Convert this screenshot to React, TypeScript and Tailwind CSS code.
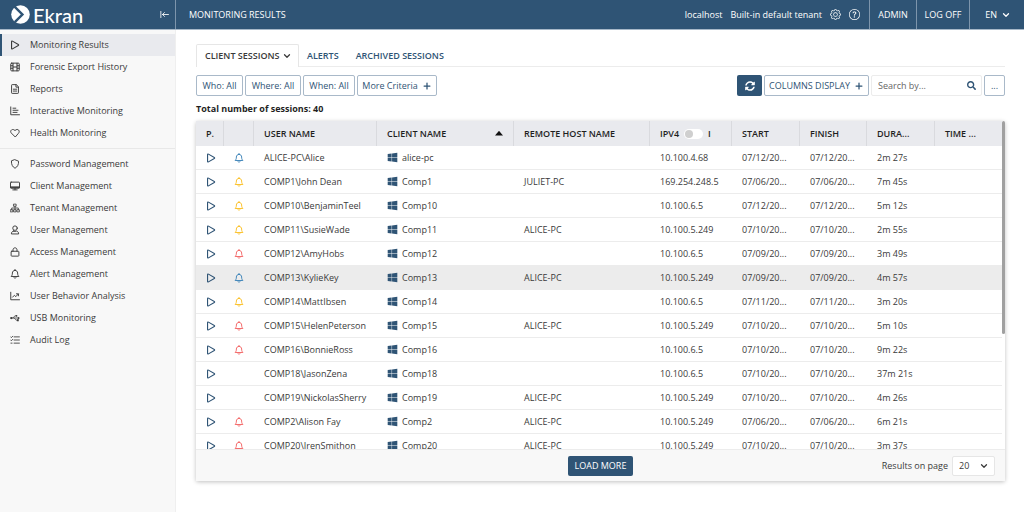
import React, { useState } from "react";
import clsx from "clsx";
import { FaSearch, FaSyncAlt, FaWindows } from "react-icons/fa";
import { BsQuestionCircle, BsGear } from "react-icons/bs";
import { ChevronDown, Plus } from "lucide-react";

type IconProps = { className?: string };

/* 16x16 outline icons */
const Outline: React.FC<IconProps & { children: React.ReactNode }> = ({ className, children }) => (
  <svg
    viewBox="0 0 16 16"
    className={className}
    fill="none"
    stroke="currentColor"
    strokeLinecap="round"
    strokeLinejoin="round"
    strokeWidth="1.5"
  >
    {children}
  </svg>
);

const PlayIcon: React.FC<IconProps> = ({ className }) => (
  <Outline className={className}>
    <path strokeWidth="1.8" d="M2.500 2.600v10.800c0 .8.700 1.200 1.400.8l9.400-5.400c.7-.4.7-1.200 0-1.600L3.900 1.800c-.7-.4-1.400 0-1.400.8z" />
  </Outline>
);

const FilmIcon: React.FC<IconProps> = ({ className }) => (
  <Outline className={className}>
    <rect x="1.200" y="1.800" width="13.600" height="12.400" rx="1.500" />
    <path strokeWidth="1.700" d="M4.800 2v12M11.200 2v12M4.800 8h6.400M1.500 6h3M1.500 10h3M11.500 6h3M11.500 10h3" />
  </Outline>
);

const FileIcon: React.FC<IconProps> = ({ className }) => (
  <Outline className={className}>
    <path d="M9.500 1H3.500a1 1 0 0 0-1 1v12a1 1 0 0 0 1 1h9a1 1 0 0 0 1-1V5zM9.500 1v4h4M5.300 8.300h5.400M5.300 11.300h5.400" />
  </Outline>
);

const ChartBarIcon: React.FC<IconProps> = ({ className }) => (
  <Outline className={className}>
    <path d="M1.200 1.500v12.500h14M4.800 3.500h4.500M4.800 6.800h8M4.800 10.200h6.500" />
  </Outline>
);

const HeartIcon: React.FC<IconProps> = ({ className }) => (
  <Outline className={className}>
    <path d="M8 14L2.200 8.200C-1 4.800 3.500-.2 8 4c4.500-4.200 9 .8 5.800 4.200z" />
  </Outline>
);

const ShieldIcon: React.FC<IconProps> = ({ className }) => (
  <Outline className={className}>
    <path d="M8 1.200L13.700 3.500c.3 5.500-1.700 9-5.700 11.300C4 12.500 2 9 2.300 3.500z" />
  </Outline>
);

const DesktopIcon: React.FC<IconProps> = ({ className }) => (
  <Outline className={className}>
    <rect x="0.800" y="1.800" width="14.400" height="9.800" rx="1" />
    <path d="M1 9.400h14M1 10.500h14M4.500 14.200h7M8 11.500v2.500" />
  </Outline>
);

const SitemapIcon: React.FC<IconProps> = ({ className }) => (
  <Outline className={className}>
    <path strokeWidth="1.300" d="M6.200 1.800h3.600v3.400H6.200zM1 10.800h3.400v3.400H1zM6.300 10.800h3.400v3.400H6.300zM11.600 10.800H15v3.400h-3.400zM8 5.200v5.600M2.700 10.800V8h10.600v2.800" />
  </Outline>
);

const UserIcon: React.FC<IconProps> = ({ className }) => (
  <Outline className={className}>
    <circle cx="8" cy="5" r="3.600" />
    <path d="M5.500 9.700c-2 .5-3.300 1.800-3.300 4.600h11.600c0-2.800-1.300-4.100-3.300-4.600-1.500 1-3.500 1-5 0z" />
  </Outline>
);

const LockIcon: React.FC<IconProps> = ({ className }) => (
  <Outline className={className}>
    <rect x="1.800" y="6.800" width="12.400" height="7.800" rx="1" />
    <path d="M4.800 6.800V4.500c0-4.200 6.400-4.200 6.400 0v2.300" />
  </Outline>
);

const BellIcon: React.FC<IconProps> = ({ className }) => (
  <Outline className={className}>
    <path d="M8 .9v1.300M8 2.200c-2.600 0-4.200 1.800-4.200 4.200 0 3.400-.8 4-2 5.600h12.400c-1.200-1.600-2-2.200-2-5.600 0-2.400-1.600-4.200-4.200-4.200zM6.400 14c.4 1.200 2.800 1.200 3.200 0" />
  </Outline>
);

const TrendIcon: React.FC<IconProps> = ({ className }) => (
  <Outline className={className}>
    <path d="M1.200 2v12h14M4.200 9.800l2.800-3 2.300 2.200 4-4.200M10.300 4.500h3.200v3.200" />
  </Outline>
);

const UsbIcon: React.FC<IconProps> = ({ className }) => (
  <Outline className={className}>
    <path strokeWidth="1.200" d="M2 8h11M4.500 8c1.800 0 2-3.500 4-3.500h1M6.500 8c1.800 0 2 3.500 4 3.500h.7" />
    <circle cx="2" cy="8" r="1.800" fill="currentColor" stroke="none" />
    <path fill="currentColor" stroke="none" d="M12.500 5.800L16 8l-3.500 2.200zM11 10h3v3h-3z" />
    <circle cx="10.300" cy="4.500" r="1.500" fill="currentColor" stroke="none" />
  </Outline>
);

const AuditIcon: React.FC<IconProps> = ({ className }) => (
  <Outline className={className}>
    <path strokeWidth="1.400" d="M6.500 3h8.500M6.500 8h8.500M6.500 13h8.500M1 3l1.200 1.200L4.300 2M1 8l1.200 1.200L4.300 7M1.500 13h1.800" />
  </Outline>
);

const CollapseIcon: React.FC<IconProps> = ({ className }) => (
  <Outline className={className}>
    <path d="M1.500 2.500v11M15 8H4.500M8 4.500L4.500 8 8 11.500" />
  </Outline>
);

const LogoMark: React.FC<IconProps> = ({ className }) => (
  <svg viewBox="0 0 20 20" className={className}>
    <circle cx="10" cy="10" r="9.800" fill="#fff" />
    <path fill="none" stroke="#2f5475" strokeWidth="2.600" d="M3.200 1.200L12 10l-8 8" />
  </svg>
);

const mainMenu = [
  { name: "Monitoring Results", icon: PlayIcon },
  { name: "Forensic Export History", icon: FilmIcon },
  { name: "Reports", icon: FileIcon },
  { name: "Interactive Monitoring", icon: ChartBarIcon },
  { name: "Health Monitoring", icon: HeartIcon }
];

const manageMenu = [
  { name: "Password Management", icon: ShieldIcon },
  { name: "Client Management", icon: DesktopIcon },
  { name: "Tenant Management", icon: SitemapIcon },
  { name: "User Management", icon: UserIcon },
  { name: "Access Management", icon: LockIcon },
  { name: "Alert Management", icon: BellIcon },
  { name: "User Behavior Analysis", icon: TrendIcon },
  { name: "USB Monitoring", icon: UsbIcon },
  { name: "Audit Log", icon: AuditIcon }
];

const bellColors = {
  blue: "text-[#3b82b8]",
  yellow: "text-[#fbbf24]",
  red: "text-[#f26464]"
};

type Session = {
  user: string;
  client: string;
  host?: string;
  ip: string;
  date: string;
  duration: string;
  alert?: keyof typeof bellColors;
};

const sessions: Session[] = [
  { user: "ALICE-PC\\Alice", client: "alice-pc", ip: "10.100.4.68", date: "07/12/20...", duration: "2m 27s", alert: "blue" },
  { user: "COMP1\\John Dean", client: "Comp1", host: "JULIET-PC", ip: "169.254.248.5", date: "07/06/20...", duration: "7m 45s", alert: "yellow" },
  { user: "COMP10\\BenjaminTeel", client: "Comp10", ip: "10.100.6.5", date: "07/12/20...", duration: "5m 12s", alert: "yellow" },
  { user: "COMP11\\SusieWade", client: "Comp11", host: "ALICE-PC", ip: "10.100.5.249", date: "07/10/20...", duration: "2m 55s", alert: "yellow" },
  { user: "COMP12\\AmyHobs", client: "Comp12", ip: "10.100.6.5", date: "07/09/20...", duration: "3m 49s", alert: "red" },
  { user: "COMP13\\KylieKey", client: "Comp13", host: "ALICE-PC", ip: "10.100.5.249", date: "07/09/20...", duration: "4m 57s", alert: "blue" },
  { user: "COMP14\\MattIbsen", client: "Comp14", ip: "10.100.6.5", date: "07/11/20...", duration: "3m 20s", alert: "yellow" },
  { user: "COMP15\\HelenPeterson", client: "Comp15", host: "ALICE-PC", ip: "10.100.5.249", date: "07/10/20...", duration: "5m 10s", alert: "red" },
  { user: "COMP16\\BonnieRoss", client: "Comp16", ip: "10.100.6.5", date: "07/10/20...", duration: "9m 22s", alert: "red" },
  { user: "COMP18\\JasonZena", client: "Comp18", ip: "10.100.6.5", date: "07/10/20...", duration: "37m 21s" },
  { user: "COMP19\\NickolasSherry", client: "Comp19", host: "ALICE-PC", ip: "10.100.5.249", date: "07/10/20...", duration: "4m 26s" },
  { user: "COMP2\\Alison Fay", client: "Comp2", host: "ALICE-PC", ip: "10.100.5.249", date: "07/06/20...", duration: "6m 21s", alert: "red" },
  { user: "COMP20\\IrenSmithon", client: "Comp20", host: "ALICE-PC", ip: "10.100.5.249", date: "07/10/20...", duration: "3m 37s", alert: "red" }
];

type MenuProps = {
  items: { name: string; icon: React.ComponentType<IconProps> }[];
  active?: string;
};
const Menu: React.FC<MenuProps> = ({ items, active }) => (
  <ul>
    {items.map(({ name, icon: Icon }) => (
      <li key={name}>
        <a
          href="#"
          className={clsx(
            "flex h-[22px] items-center gap-[10px] border-l-2 pl-2",
            name === active ? "border-[#2f5475] bg-[#e9eaee]" : "border-transparent"
          )}
        >
          <Icon className="size-[10px] shrink-0" />
          {name}
        </a>
      </li>
    ))}
  </ul>
);

const Th: React.FC<{ children?: React.ReactNode; className?: string }> = ({ children, className }) => (
  <th
    scope="col"
    className={clsx("h-[25px] truncate border-r border-[#d9dade] pl-[10px] text-left font-semibold last:border-r-0", className)}
  >
    {children}
  </th>
);

const outline = "h-[21px] rounded-xs border border-[#a9b9c9] bg-white text-[#2f5475]";

const App: React.FC = () => {
  const [search, setSearch] = useState("");
  const [ipv6, setIpv6] = useState(false);

  return (
    <div className="flex min-h-screen flex-col bg-white font-['Open_Sans',sans-serif] text-[9px] leading-3 text-[#3a3a3a]">
      <header className="flex h-[30px] border-b border-[#a7b8c8] bg-[#2f5475] text-white">
        <div className="flex w-[176px] shrink-0 items-center border-r border-[#7d95ac] pr-[6px] pl-[11px]">
          <LogoMark className="size-[19px]" />
          <span className="ml-[3px] pt-px font-['Lato',sans-serif] text-[20px] leading-6 font-medium">Ekran</span>
          <button type="button" aria-label="Collapse menu" className="ml-auto">
            <CollapseIcon className="size-[9px]" />
          </button>
        </div>
        <h1 className="flex flex-1 items-center pl-[13px]">MONITORING RESULTS</h1>
        <div className="flex items-center gap-2 pr-[9px]">
          <span>localhost</span>
          <span>Built-in default tenant</span>
          <button type="button" aria-label="Settings">
            <BsGear className="size-[11px]" />
          </button>
          <button type="button" aria-label="Help">
            <BsQuestionCircle className="size-[11px]" />
          </button>
        </div>
        <button type="button" className="w-[47px] border-l border-[#7d95ac]">ADMIN</button>
        <button type="button" className="w-[53px] border-l border-[#7d95ac]">LOG OFF</button>
        <button type="button" className="flex w-[55px] items-center justify-end gap-1 border-l border-[#7d95ac] pr-[13px]">
          EN
          <ChevronDown className="size-[10px]" strokeWidth={3} />
        </button>
      </header>

      <div className="flex flex-1">
        <nav className="w-[176px] shrink-0 border-r border-[#efefef] bg-[#f8f8f8] pt-1">
          <Menu items={mainMenu} active="Monitoring Results" />
          <hr className="mt-1 mb-1 border-[#e8e8e8]" />
          <Menu items={manageMenu} />
        </nav>

        <main className="min-w-0 flex-1 pt-[14px] pr-[19px] pl-5">
          <div role="tablist" className="flex h-[23px] border-b border-[#ececec] font-semibold text-[#2f5475]">
            <button
              type="button"
              role="tab"
              aria-selected="true"
              className="-mb-px flex w-[103px] items-center gap-[2px] rounded-t-xs border border-b-0 border-[#e6e6e6] bg-white pl-2 text-[#3a3a3a]"
            >
              CLIENT SESSIONS
              <ChevronDown className="size-[10px]" strokeWidth={3} />
            </button>
            <button type="button" role="tab" aria-selected="false" className="-mb-px ml-2">ALERTS</button>
            <button type="button" role="tab" aria-selected="false" className="-mb-px ml-[17px]">ARCHIVED SESSIONS</button>
          </div>

          <div className="mt-2 flex gap-[2px]">
            <button type="button" className={clsx(outline, "w-[47px]")}>Who: All</button>
            <button type="button" className={clsx(outline, "w-[56px]")}>Where: All</button>
            <button type="button" className={clsx(outline, "w-[52px]")}>When: All</button>
            <button type="button" className={clsx(outline, "flex w-[80px] items-center justify-center gap-1")}>
              More Criteria
              <Plus className="size-[10px]" strokeWidth={3} />
            </button>
            <button
              type="button"
              aria-label="Refresh"
              className="ml-auto flex h-[21px] w-[25px] items-center justify-center rounded-xs bg-[#2f5475] text-white"
            >
              <FaSyncAlt className="size-[10px]" />
            </button>
            <button type="button" className={clsx(outline, "flex w-[105px] items-center justify-center gap-1")}>
              COLUMNS DISPLAY
              <Plus className="size-[10px]" strokeWidth={3} />
            </button>
            <label className="flex h-[21px] w-[111px] items-center rounded-xs border border-[#ececec] pr-[5px] pl-[6px]">
              <input
                aria-label="Search"
                placeholder="Search by..."
                value={search}
                onChange={(e) => setSearch(e.target.value)}
                className="w-full min-w-0 outline-none placeholder:text-[#666]"
              />
              <FaSearch className="size-[9px] shrink-0 text-[#2f5475]" />
            </label>
            <button type="button" className={clsx(outline, "w-[21px]")}>...</button>
          </div>

          <p className="mt-[7px] mb-[6px] font-bold text-[#1f1f1f]">Total number of sessions: 40</p>

          <section className="relative rounded-xs bg-white shadow-[0_1px_4px_rgba(0,0,0,0.25)]">
            <div className="max-h-[328px] overflow-y-auto pr-[3px] [scrollbar-width:none]">
              <table className="w-full table-fixed border-separate border-spacing-0">
                <colgroup>
                  <col className="w-[28px]" />
                  <col className="w-[30px]" />
                  <col className="w-[123px]" />
                  <col className="w-[137px]" />
                  <col className="w-[136px]" />
                  <col className="w-[82px]" />
                  <col className="w-[68px]" />
                  <col className="w-[67px]" />
                  <col className="w-[68px]" />
                  <col className="w-[67px]" />
                </colgroup>
                <thead className="bg-[#e9eaee] text-[#1f1f1f]">
                  <tr>
                    <Th>P.</Th>
                    <Th />
                    <Th>USER NAME</Th>
                    <Th>
                      <div className="flex items-center justify-between pr-[10px]">
                        CLIENT NAME
                        <svg viewBox="0 0 8 5" className="h-[5px] w-2">
                          <path d="M0 4.600h8L4.600.4q-.6-.6-1.200 0z" fill="#111" />
                        </svg>
                      </div>
                    </Th>
                    <Th>REMOTE HOST NAME</Th>
                    <Th>
                      <div className="flex items-center gap-[5px]">
                        IPV4
                        <button
                          type="button"
                          role="switch"
                          aria-checked={ipv6}
                          aria-label="Show IPv6 addresses"
                          onClick={() => setIpv6(!ipv6)}
                          className={clsx("flex h-[10px] w-[19px] items-center rounded-full bg-white px-px", ipv6 && "justify-end")}
                        >
                          <span className="size-2 rounded-full bg-[#cfcfcf]" />
                        </button>
                        I
                      </div>
                    </Th>
                    <Th>START</Th>
                    <Th>FINISH</Th>
                    <Th>DURA...</Th>
                    <Th>TIME ...</Th>
                  </tr>
                </thead>
                <tbody>
                  {sessions.map((item) => (
                    <tr
                      key={item.user}
                      className={clsx(
                        "[&>td]:h-6 [&>td]:truncate [&>td]:border-b [&>td]:border-[#ececec] [&>td]:pl-[10px]",
                        item.client === "Comp13" && "bg-[#ececec]"
                      )}
                    >
                      <td>
                        <button type="button" aria-label={`Play ${item.user}`} className="block text-[#2f5475]">
                          <PlayIcon className="size-[10px]" />
                        </button>
                      </td>
                      <td>{item.alert && <BellIcon className={clsx("block size-[10px]", bellColors[item.alert])} />}</td>
                      <td>{item.user}</td>
                      <td>
                        <div className="flex items-center gap-1">
                          <FaWindows className="size-[11px] text-[#2f5475]" />
                          {item.client}
                        </div>
                      </td>
                      <td>{item.host}</td>
                      <td>{item.ip}</td>
                      <td>{item.date}</td>
                      <td>{item.date}</td>
                      <td>{item.duration}</td>
                      <td />
                    </tr>
                  ))}
                </tbody>
              </table>
            </div>
            <div className="absolute top-0 right-0 h-[213px] w-[3px] rounded-full bg-[#a0a0a0]" />

            <footer className="grid h-8 grid-cols-3 items-center border-t border-[#ececec] bg-[#f8f8f8]">
              <button type="button" className="col-start-2 h-5 w-[65px] justify-self-center rounded-xs bg-[#2f5475] text-white">
                LOAD MORE
              </button>
              <div className="flex items-center gap-1 justify-self-end pr-[10px]">
                <label htmlFor="page-size">Results on page</label>
                <div className="relative">
                  <select
                    id="page-size"
                    defaultValue="20"
                    className="h-5 w-[43px] appearance-none rounded-xs border border-[#e6e6e6] bg-white pl-[6px]"
                  >
                    <option>20</option>
                    <option>50</option>
                    <option>100</option>
                  </select>
                  <ChevronDown className="pointer-events-none absolute top-[5px] right-[6px] size-[10px]" strokeWidth={3} />
                </div>
              </div>
            </footer>
          </section>
        </main>
      </div>
    </div>
  );
};

export default App;
